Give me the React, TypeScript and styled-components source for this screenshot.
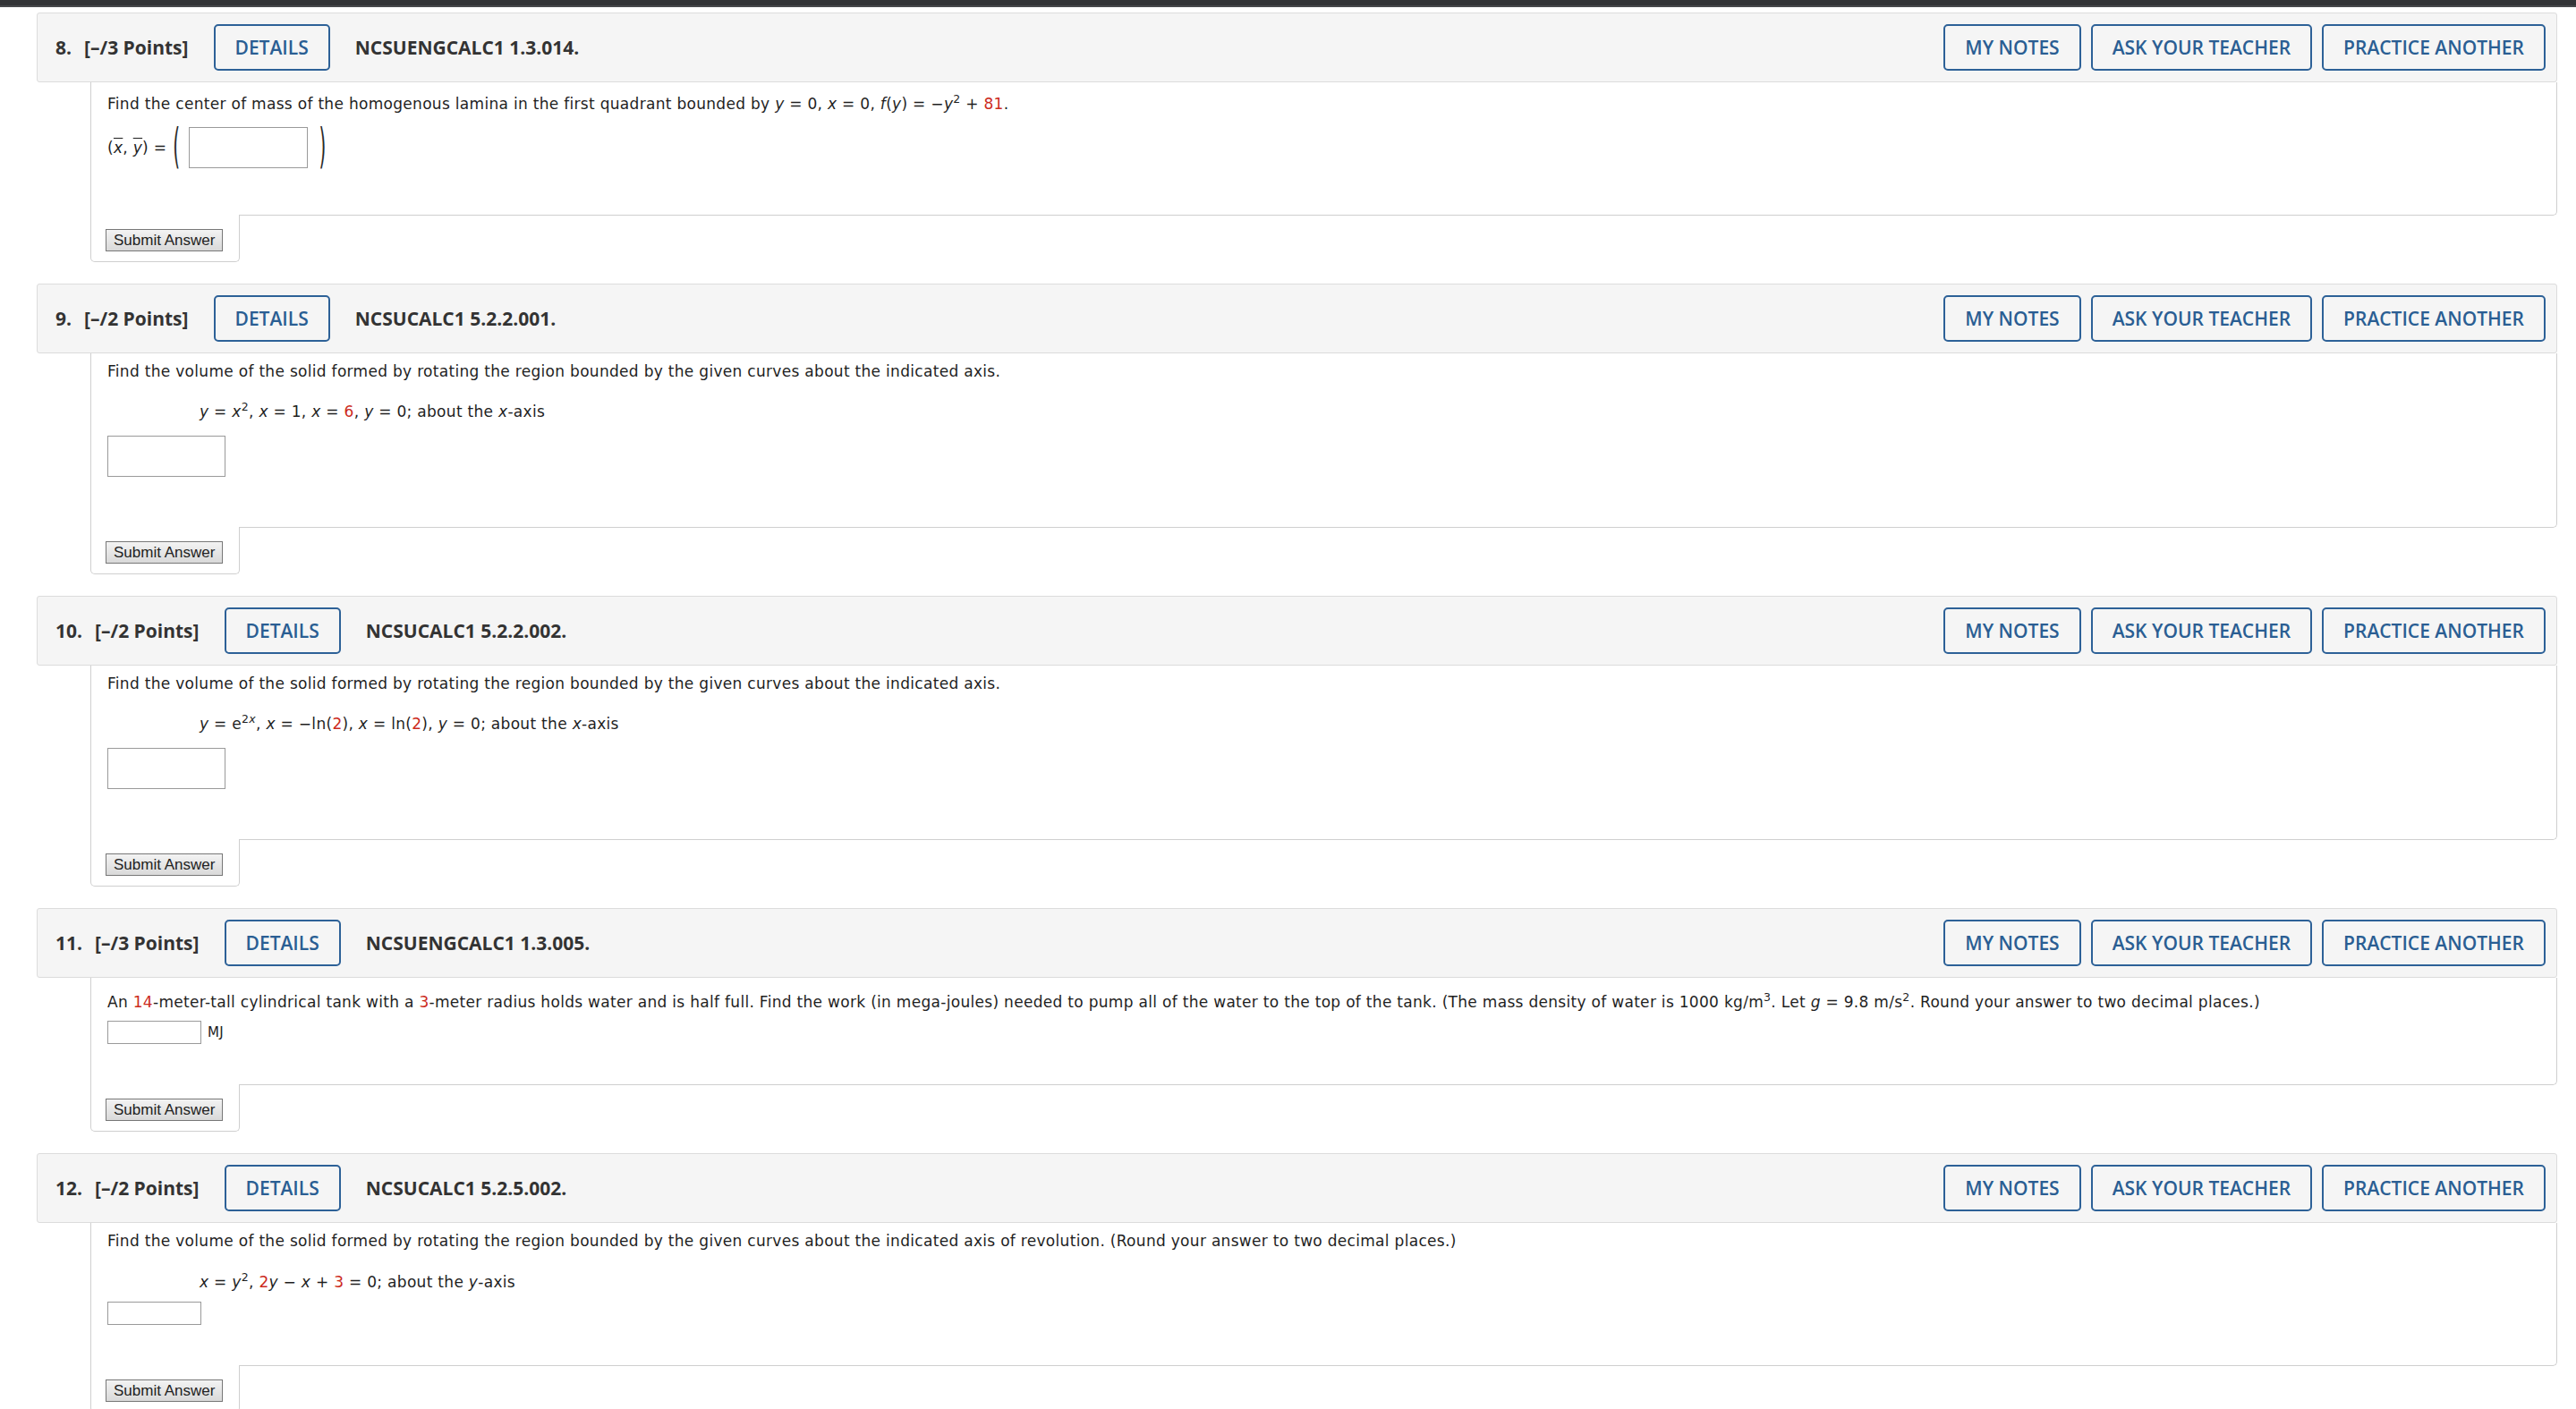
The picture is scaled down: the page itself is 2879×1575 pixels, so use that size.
import React from 'react';
import styled, { createGlobalStyle } from 'styled-components';

const Global = createGlobalStyle`
  html, body { margin: 0; padding: 0; background: #fff; }
  body { font-family: "DejaVu Sans", Verdana, sans-serif; }
`;

const TopBar = styled.div`
  height: 6px;
  background: #333437;
  border-bottom: 2px solid #47484b;
`;

const Page = styled.div`
  padding: 6px 21px 0 41px;
`;

const Card = styled.section`
  margin-bottom: 24px;
`;

const Header = styled.div`
  display: flex;
  align-items: center;
  height: 78px;
  box-sizing: border-box;
  padding: 0 12px 0 20px;
  background: #f5f5f5;
  border: 1px solid #dcdcdc;
  border-radius: 3px;
  font-family: "Open Sans", "Liberation Sans", sans-serif;
  color: #333;
`;

const Num = styled.span`
  font-size: 21px;
  font-weight: 700;
  margin-right: 14px;
`;

const Points = styled.span`
  font-size: 21px;
  font-weight: 700;
  margin-right: 28px;
`;

const Code = styled.span`
  font-size: 21px;
  font-weight: 700;
  margin-left: 28px;
`;

const OutlineButton = styled.button`
  height: 52px;
  box-sizing: border-box;
  padding: 0 22px;
  border: 2px solid #2d6197;
  border-radius: 5px;
  background: transparent;
  font-family: "Open Sans", "Liberation Sans", sans-serif;
  font-size: 21px;
  font-weight: 600;
  color: #2a5e93;
  cursor: pointer;
  white-space: nowrap;
`;

const Actions = styled.div`
  margin-left: auto;
  display: flex;
  gap: 11px;
`;

const Body = styled.div<{ $pt: number; $pb: number }>`
  margin-left: 60px;
  padding: ${(p) => p.$pt}px 18px ${(p) => p.$pb}px 18px;
  background: #fff;
  border: 1px solid #cfcfcf;
  border-top: none;
  border-radius: 0 0 5px 0;
  font-size: 17px;
  letter-spacing: 0.3px;
  line-height: 20px;
  color: #1f1f1f;
`;

const Para = styled.div<{ $mt?: number; $indent?: number }>`
  margin-top: ${(p) => p.$mt ?? 0}px;
  padding-left: ${(p) => p.$indent ?? 0}px;
  white-space: nowrap;
`;

const AnswerRow = styled.div<{ $mt: number; $gap?: number }>`
  display: flex;
  align-items: center;
  gap: ${(p) => p.$gap ?? 0}px;
  margin-top: ${(p) => p.$mt}px;
`;

const AnswerInput = styled.input<{ $w: number; $h: number }>`
  display: block;
  width: ${(p) => p.$w}px;
  height: ${(p) => p.$h}px;
  box-sizing: border-box;
  border: 1px solid #9a9a9a;
  border-radius: 0;
  background: #fff;
  margin: 0;
  padding: 2px 4px;
  font-family: "DejaVu Sans", sans-serif;
  font-size: 15px;
`;

const Unit = styled.span`
  font-size: 15px;
  color: #222;
`;

const BigParen = styled.span<{ $side: 'l' | 'r' }>`
  display: inline-block;
  height: 55px;
  line-height: 55px;
  font-family: "DejaVu Sans", sans-serif;
  font-weight: 400;
  font-size: 20px;
  color: #2a2a2a;
  transform: scaleY(2.7);
  margin: ${(p) => (p.$side === 'l' ? '0 10px 0 7px' : '0 0 0 12px')};
`;

const Var = styled.i`
  font-style: italic;
`;

const Bar = styled.i`
  font-style: italic;
  text-decoration: overline;
  text-decoration-thickness: 1px;
`;

const Red = styled.span`
  color: #cc2b1d;
`;

const Sup = styled.sup`
  font-size: 12.5px;
  line-height: 0;
  vertical-align: 7px;
`;

const SubmitBox = styled.div`
  position: relative;
  margin-left: 60px;
  margin-top: -1px;
  width: fit-content;
  padding: 16px 18px 11px 16px;
  background: #fff;
  border: 1px solid #cfcfcf;
  border-top: none;
  border-radius: 0 0 5px 5px;
`;

const SubmitButton = styled.button`
  display: block;
  height: 25px;
  box-sizing: border-box;
  padding: 0 8px;
  margin: 0;
  border: 1px solid #777;
  border-radius: 0;
  background: linear-gradient(#f3f3f3, #d9d9d9);
  font-family: "Liberation Sans", Arial, sans-serif;
  font-size: 17px;
  line-height: 23px;
  color: #222;
  white-space: nowrap;
`;

type QProps = {
  num: string;
  points: string;
  code: string;
  pt: number;
  pb: number;
  children: React.ReactNode;
};

const Question = ({ num, points, code, pt, pb, children }: QProps) => (
  <Card>
    <Header>
      <Num>{num}</Num>
      <Points>{points}</Points>
      <OutlineButton>DETAILS</OutlineButton>
      <Code>{code}</Code>
      <Actions>
        <OutlineButton>MY NOTES</OutlineButton>
        <OutlineButton>ASK YOUR TEACHER</OutlineButton>
        <OutlineButton>PRACTICE ANOTHER</OutlineButton>
      </Actions>
    </Header>
    <Body $pt={pt} $pb={pb}>
      {children}
    </Body>
    <SubmitBox>
      <SubmitButton>Submit Answer</SubmitButton>
    </SubmitBox>
  </Card>
);

const VOLUME = 'Find the volume of the solid formed by rotating the region bounded by the given curves about the indicated axis.';

export default function App() {
  return (
    <>
      <Global />
      <TopBar />
      <Page>
        <Question num="8." points="[–/3 Points]" code="NCSUENGCALC1 1.3.014." pt={14} pb={48}>
          <Para>
            Find the center of mass of the homogenous lamina in the first quadrant bounded by <Var>y</Var> = 0,{' '}
            <Var>x</Var> = 0, <Var>f</Var>(<Var>y</Var>) = −<Var>y</Var>
            <Sup>2</Sup> + <Red>81</Red>.
          </Para>
          <AnswerRow $mt={11}>
            <span>
              (<Bar>x</Bar>, <Bar>y</Bar>) =
            </span>
            <BigParen $side="l">(</BigParen>
            <AnswerInput $w={133} $h={46} />
            <BigParen $side="r">)</BigParen>
          </AnswerRow>
        </Question>

        <Question num="9." points="[–/2 Points]" code="NCSUCALC1 5.2.2.001." pt={10} pb={56}>
          <Para>{VOLUME}</Para>
          <Para $mt={25} $indent={103}>
            <Var>y</Var> = <Var>x</Var>
            <Sup>2</Sup>, <Var>x</Var> = 1, <Var>x</Var> = <Red>6</Red>, <Var>y</Var> = 0; about the <Var>x</Var>-axis
          </Para>
          <AnswerRow $mt={17}>
            <AnswerInput $w={132} $h={46} />
          </AnswerRow>
        </Question>

        <Question num="10." points="[–/2 Points]" code="NCSUCALC1 5.2.2.002." pt={10} pb={56}>
          <Para>{VOLUME}</Para>
          <Para $mt={25} $indent={103}>
            <Var>y</Var> = e
            <Sup>
              2<Var>x</Var>
            </Sup>
            , <Var>x</Var> = −ln(<Red>2</Red>), <Var>x</Var> = ln(<Red>2</Red>), <Var>y</Var> = 0; about the{' '}
            <Var>x</Var>-axis
          </Para>
          <AnswerRow $mt={17}>
            <AnswerInput $w={132} $h={46} />
          </AnswerRow>
        </Question>

        <Question num="11." points="[–/3 Points]" code="NCSUENGCALC1 1.3.005." pt={17} pb={45}>
          <Para>
            An <Red>14</Red>-meter-tall cylindrical tank with a <Red>3</Red>-meter radius holds water and is half full.
            Find the work (in mega-joules) needed to pump all of the water to the top of the tank. (The mass density of
            water is 1000 kg/m<Sup>3</Sup>. Let <Var>g</Var> = 9.8 m/s<Sup>2</Sup>. Round your answer to two decimal
            places.)
          </Para>
          <AnswerRow $mt={11} $gap={7}>
            <AnswerInput $w={105} $h={26} />
            <Unit>MJ</Unit>
          </AnswerRow>
        </Question>

        <Question num="12." points="[–/2 Points]" code="NCSUCALC1 5.2.5.002." pt={10} pb={45}>
          <Para>
            Find the volume of the solid formed by rotating the region bounded by the given curves about the indicated
            axis of revolution. (Round your answer to two decimal places.)
          </Para>
          <Para $mt={26} $indent={103}>
            <Var>x</Var> = <Var>y</Var>
            <Sup>2</Sup>, <Red>2</Red>
            <Var>y</Var> − <Var>x</Var> + <Red>3</Red> = 0; about the <Var>y</Var>-axis
          </Para>
          <AnswerRow $mt={12}>
            <AnswerInput $w={105} $h={26} />
          </AnswerRow>
        </Question>
      </Page>
    </>
  );
}
